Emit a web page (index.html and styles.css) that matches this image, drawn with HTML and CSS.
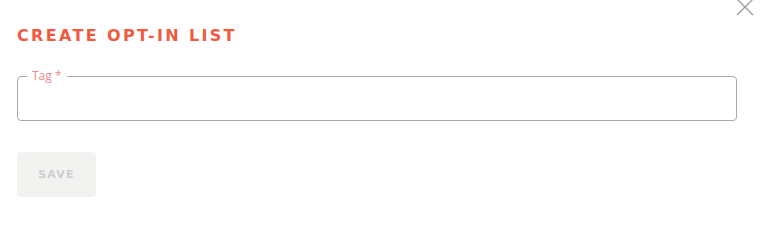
FILE: index.html
```html
<!DOCTYPE html>
<html>
<head>
<meta charset="utf-8">
<link rel="stylesheet" href="styles.css">
</head>
<body>
<div class="dialog">
  <button class="close" aria-label="Close">
    <svg width="18" height="18" viewBox="0 0 18 18"><path d="M1 0 L17 16 M17 0 L1 16" stroke="#9a9a9a" stroke-width="1.3" fill="none"/></svg>
  </button>
  <h2 class="title">CREATE OPT-IN LIST</h2>
  <div class="field">
    <label class="legend">Tag *</label>
    <input class="input" type="text">
  </div>
  <button class="save">SAVE</button>
</div>
</body>
</html>
```
FILE: styles.css
```css
html, body { margin: 0; padding: 0; background: #fff; }
body { font-family: "DejaVu Sans", sans-serif; }
.dialog { position: relative; width: 765px; height: 208px; padding: 0 28px 0 17px; box-sizing: border-box; }
.close { position: absolute; top: -1px; left: 736px; padding: 0; border: 0; background: none; width: 18px; height: 18px; }
.close svg { display: block; }
.title { margin: 0; padding-top: 25px; height: 21px; line-height: 21px; font-size: 16px; font-weight: 700; color: #f05a3f; letter-spacing: 2.35px; }
.field { position: relative; margin-top: 30px; height: 45px; width: 720px; box-sizing: border-box; border: 1px solid #a3aba8; border-radius: 4px; }
.legend { position: absolute; left: 9px; top: -8px; padding: 0 5px; background: #fff; font-family: "Open Sans", sans-serif; font-size: 12px; line-height: 14px; color: #f08a8a; }
.input { border: 0; outline: none; width: 100%; height: 100%; background: transparent; box-sizing: border-box; padding: 0 14px; }
.save { display: block; margin-top: 31px; width: 79px; height: 45px; border: 0; border-radius: 4px; background: #f2f2f1; color: #cdcdcd; font-family: "DejaVu Sans", sans-serif; font-weight: 700; font-size: 11px; letter-spacing: 1.2px; padding: 0; }
```
